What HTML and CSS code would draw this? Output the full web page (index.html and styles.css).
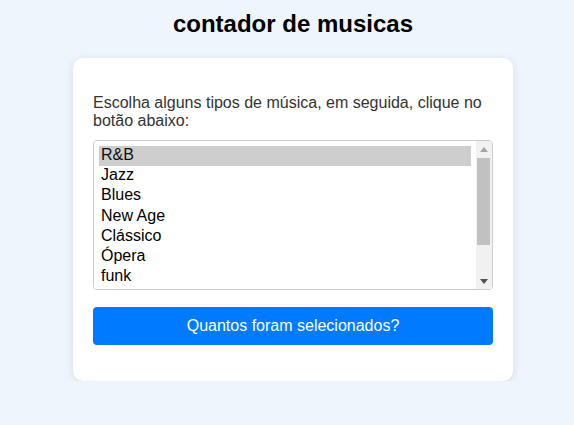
FILE: index.html
```html
<!DOCTYPE html>
<html lang="pt">
<head>
<meta charset="utf-8">
<title>contador de musicas</title>
<link rel="stylesheet" href="styles.css">
</head>
<body>
<h1 class="title">contador de musicas</h1>
<div class="card">
  <form class="form">
    <p class="label">Escolha alguns tipos de música, em seguida, clique no botão abaixo:</p>
    <div class="list-wrap">
      <select class="list" multiple size="7">
        <option selected>R&amp;B</option>
        <option>Jazz</option>
        <option>Blues</option>
        <option>New Age</option>
        <option>Clássico</option>
        <option>Ópera</option>
        <option>funk</option>
        <option>Rock</option>
        <option>Pop</option>
      </select>
      <div class="scrollbar" aria-hidden="true">
        <span class="sb-btn"><svg width="8" height="5" viewBox="0 0 8 5"><path d="M0 5 L4 0 L8 5 Z" fill="#a3a3a3"/></svg></span>
        <span class="sb-track"><span class="sb-thumb"></span></span>
        <span class="sb-btn"><svg width="8" height="5" viewBox="0 0 8 5"><path d="M0 0 L8 0 L4 5 Z" fill="#505050"/></svg></span>
      </div>
    </div>
    <button type="button" class="btn">Quantos foram selecionados?</button>
  </form>
</div>
</body>
</html>
```
FILE: styles.css
```css
html, body {
  background: #eef5fd;
}
body {
  margin: 0;
  padding: 0 0 0 12px;
  font-family: "Liberation Sans", Arial, sans-serif;
  color: #333;
}
.title {
  margin: 10px 0 20px;
  font-size: 24px;
  line-height: 28px;
  text-align: center;
  color: #000;
}
.card {
  width: 400px;
  margin: 0 auto;
  padding: 36px 20px 36px;
  background: #fff;
  border-radius: 10px;
  box-shadow: 0 2px 10px rgba(0, 0, 0, 0.1);
}
.form {
  display: flex;
  flex-direction: column;
}
.label {
  margin: 0 0 10px;
  font-size: 16px;
  line-height: 18px;
  color: #333;
}
.list-wrap {
  position: relative;
  display: flex;
  flex-direction: column;
}
.list {
  height: 150px;
  box-sizing: border-box;
  padding: 5px 21px 5px 5px;
  border: 1px solid #ccc;
  border-radius: 4px;
  font-family: "Liberation Sans", Arial, sans-serif;
  font-size: 16px;
  color: #000;
  outline: none;
  background: #fff;
}
.list option {
  padding: 0 2px 1px;
}
.scrollbar {
  position: absolute;
  top: 1px;
  right: 1px;
  bottom: 1px;
  width: 16px;
  display: flex;
  flex-direction: column;
  background: #f1f1f1;
  border-radius: 0 3px 3px 0;
}
.sb-btn {
  height: 16px;
  display: flex;
  align-items: center;
  justify-content: center;
}
.sb-track {
  flex: 1;
  display: flex;
  flex-direction: column;
}
.sb-thumb {
  height: 87px;
  margin: 1px 2px 0 1px;
  background: #c1c1c1;
}
.btn {
  margin-top: 17px;
  height: 38px;
  border: none;
  border-radius: 4px;
  background: #007bff;
  color: #fff;
  font-family: "Liberation Sans", Arial, sans-serif;
  font-size: 16px;
}
```
